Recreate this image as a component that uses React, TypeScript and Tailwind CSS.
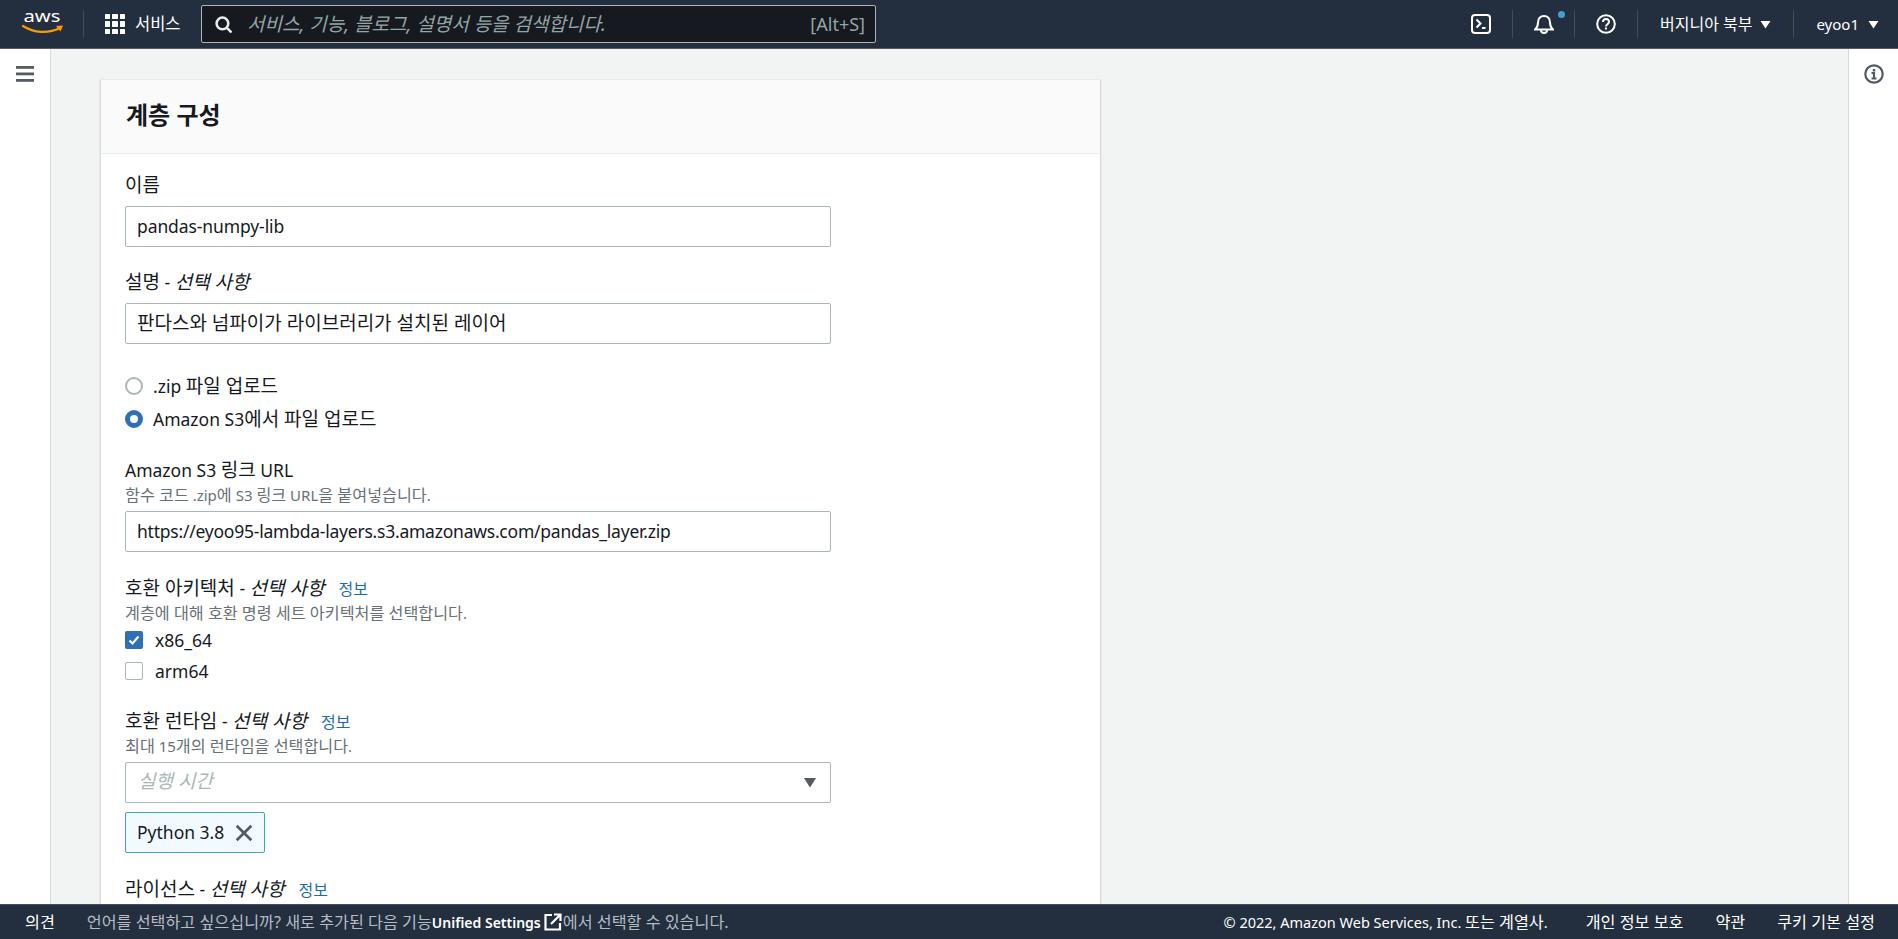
import React from "react";

const Caret = ({ className }: { className?: string }) => (
  <svg viewBox="0 0 12 10" className={className} fill="currentColor">
    <path d="M0.5 1h11L6 9.500z" />
  </svg>
);

/* Hangul runs in the reference are set wider than the Latin runs beside them. */
const Mix = ({ text, lat, kor }: { text: string; lat: string; kor: string }) => (
  <>
    {text.split(/([\uac00-\ud7a3]+(?:\s+[\uac00-\ud7a3]+)*)/).map((part, i) =>
      part ? (
        <span key={i} className={`whitespace-pre ${/[\uac00-\ud7a3]/.test(part) ? kor : lat}`}>
          {part}
        </span>
      ) : null
    )}
  </>
);

const Body = ({ text }: { text: string }) => <Mix text={text} lat="text-[17.5px]" kor="text-[19px]" />;
const Small = ({ text }: { text: string }) => <Mix text={text} lat="text-[15px]" kor="text-[16.2px]" />;

const Label = ({ text, optional, info }: { text: string; optional?: boolean; info?: boolean }) => (
  <div className="text-[#16191f] leading-[22px] h-[22px] flex items-center">
    <Body text={text} />
    {optional && (
      <span className="whitespace-pre">
        <span className="text-[17.5px]"> - </span>
        <i className="text-[19px]">선택 사항</i>
      </span>
    )}
    {info && <span className="ml-[14px] text-[16px] text-[#1a6bb5] mt-[2px]">정보</span>}
  </div>
);

const Sub = ({ text }: { text: string }) => (
  <div className="text-[#687078] leading-[16px] h-[16px] flex items-center mt-[6px]">
    <Small text={text} />
  </div>
);

const Input = ({ value, className }: { value: string; className?: string }) => (
  <div className={`w-[706px] h-[41px] border border-[#aab7b8] rounded-[2px] px-[11px] flex items-center text-[#16191f] bg-white ${className ?? ""}`}>
    <Body text={value} />
  </div>
);

const Divider = ({ className }: { className: string }) => <div className={`w-px h-[28px] bg-[#414d5c] ${className}`} />;

export default function App() {
  return (
    <div className="h-[939px] w-[1898px] flex flex-col overflow-hidden bg-[#f2f3f3] font-['Noto_Sans','Noto_Sans_CJK_KR',sans-serif]">
      <header className="h-[49px] shrink-0 bg-[#232f3e] border-b border-[#545b64] flex items-center text-white">
        <svg viewBox="0 0 42 26" className="ml-[22px] w-[42px] h-[26px] mb-[2px] overflow-visible">
          <text x="20" y="12" textAnchor="middle" fontSize="17" textLength="37" lengthAdjust="spacingAndGlyphs" fill="#fff" fontFamily="Noto Sans, sans-serif">aws</text>
          <path d="M1 16c11 7 25 8 37 2" stroke="#ff9900" strokeWidth="2.200" fill="none" strokeLinecap="round" />
          <path d="M34 16l7-.5-2.500 6z" fill="#ff9900" />
        </svg>
        <Divider className="ml-[19px]" />
        <div className="ml-[21px] grid grid-cols-3 gap-[2px] w-[20px] h-[20px]">
          {Array.from({ length: 9 }).map((_, i) => (
            <div key={i} className="w-[5.300px] h-[5.300px] bg-white rounded-[0.5px]" />
          ))}
        </div>
        <span className="ml-[10px] text-[16.500px] w-[46px] whitespace-nowrap">서비스</span>
        <div className="ml-[20px] w-[675px] h-[38px] bg-[#16191f] border border-[#aab7b8] rounded-[2px] flex items-center pl-[13px] pr-[10px]">
          <svg viewBox="0 0 16 16" className="w-[17px] h-[17px]" fill="none" stroke="#eaeded" strokeWidth="2.400">
            <circle cx="7" cy="7" r="5.500" />
            <path d="M11 11l4.500 4.500" />
          </svg>
          <span className="ml-[15px] italic text-[19px] text-[#95a5a6]">서비스, 기능, 블로그, 설명서 등을 검색합니다.</span>
          <span className="ml-auto text-[18px] text-[#95a5a6]">[Alt+S]</span>
        </div>
        <div className="ml-auto flex items-center">
          <svg viewBox="0 0 20 20" className="w-[20px] h-[20px]" fill="none" stroke="#fff" strokeWidth="2">
            <rect x="1" y="1" width="18" height="18" rx="3" />
            <path d="M5.500 5.500l4 4-4 4M11 14h3.500" />
          </svg>
          <Divider className="ml-[21px]" />
          <div className="relative ml-[21px] w-[20px] h-[20px]">
            <svg viewBox="0 0 20 20" className="w-[20px] h-[20px]" fill="none" stroke="#fff" strokeWidth="2">
              <path d="M1 15.500h18c-2.500-2-3-4-3-7 0-4-2.500-6.500-6-6.500S4 4.500 4 8.500c0 3-.5 5-3 7z" />
              <path d="M7 16a3 3 0 0 0 6 0" />
            </svg>
            <div className="absolute top-[-3px] right-[-11px] w-[7px] h-[7px] rounded-full bg-[#44a0cd]" />
          </div>
          <Divider className="ml-[20px]" />
          <svg viewBox="0 0 20 20" className="ml-[21px] w-[20px] h-[20px]" fill="none" stroke="#fff" strokeWidth="2">
            <circle cx="10" cy="10" r="8.800" />
            <path d="M7 8c0-1.800 1.300-3 3-3s3 1.200 3 2.800c0 2.400-3 2.400-3 4.700" />
            <path d="M10 13.500v2" />
          </svg>
          <Divider className="ml-[21px]" />
          <span className="ml-[22px] text-[16px] whitespace-nowrap">버지니아 북부</span>
          <Caret className="ml-[8px] w-[11px] h-[9px]" />
          <Divider className="ml-[22px]" />
          <span className="ml-[22px] text-[15px]">eyoo1</span>
          <Caret className="ml-[9px] w-[11px] h-[9px] mr-[19px]" />
        </div>
      </header>

      <div className="flex-1 min-h-0 flex">
        <aside className="w-[51px] shrink-0 bg-white border-r border-[#d5dbdb] pl-[16px] pt-[17px]">
          <svg viewBox="0 0 18 16" className="w-[18px] h-[16px]" fill="#545b64">
            <rect x="0" y="0" width="18" height="2.800" />
            <rect x="0" y="6.500" width="18" height="2.800" />
            <rect x="0" y="13" width="18" height="2.800" />
          </svg>
        </aside>

        <main className="flex-1 min-w-0 pl-[49px] pt-[31px] overflow-hidden">
          <section className="w-[1001px] bg-white border border-t-0 border-[#d5dbdb] shadow-[0_0_1px_rgba(0,28,36,0.2)]">
            <div className="h-[74px] bg-[#fafafa] border-b border-[#eaeded] flex items-center pl-[25px] pb-[4px]">
              <h2 className="text-[24px] font-semibold text-[#16191f]">계층 구성</h2>
            </div>
            <div className="pl-[24px] pt-[20px]">
              <Label text="이름" />
              <div className="mt-[10px]"><Input value="pandas-numpy-lib" className="tracking-[-0.1px]" /></div>

              <div className="mt-[24px]"><Label text="설명" optional /></div>
              <div className="mt-[10px]"><Input value="판다스와 넘파이가 라이브러리가 설치된 레이어" /></div>

              <div className="mt-[31px] flex items-center h-[22px] text-[#16191f]">
                <div className="w-[18px] h-[18px] rounded-full border-2 border-[#aab7b8] bg-white" />
                <span className="ml-[10px]"><Body text=".zip 파일 업로드" /></span>
              </div>
              <div className="mt-[11px] flex items-center h-[22px] text-[#16191f]">
                <div className="w-[18px] h-[18px] rounded-full border-[5px] border-[#2e6fb5] bg-white" />
                <span className="ml-[10px]"><Body text="Amazon S3에서 파일 업로드" /></span>
              </div>

              <div className="mt-[29px]"><Label text="Amazon S3 링크 URL" /></div>
              <Sub text="함수 코드 .zip에 S3 링크 URL을 붙여넣습니다." />
              <div className="mt-[8px]"><Input value="https://eyoo95-lambda-layers.s3.amazonaws.com/pandas_layer.zip" className="tracking-[-0.23px]" /></div>

              <div className="mt-[25px]"><Label text="호환 아키텍처" optional info /></div>
              <Sub text="계층에 대해 호환 명령 세트 아키텍처를 선택합니다." />
              <div className="mt-[8px] flex items-center h-[22px] text-[#16191f]">
                <div className="w-[18px] h-[18px] rounded-[2px] bg-[#2e6fb5] flex items-center justify-center">
                  <svg viewBox="0 0 14 14" className="w-[14px] h-[14px]" fill="none" stroke="#fff" strokeWidth="2.200">
                    <path d="M2.500 7.500l3 3 6-7" />
                  </svg>
                </div>
                <span className="ml-[12px]"><Body text="x86_64" /></span>
              </div>
              <div className="mt-[9px] flex items-center h-[22px] text-[#16191f]">
                <div className="w-[18px] h-[18px] rounded-[2px] border border-[#aab7b8] bg-white" />
                <span className="ml-[12px]"><Body text="arm64" /></span>
              </div>

              <div className="mt-[28px]"><Label text="호환 런타임" optional info /></div>
              <Sub text="최대 15개의 런타임을 선택합니다." />
              <div className="mt-[8px] w-[706px] h-[41px] border border-[#aab7b8] rounded-[2px] pl-[12px] pr-[13px] flex items-center justify-between">
                <span className="italic text-[19px] text-[#aab7b8] mb-[2px]">실행 시간</span>
                <Caret className="w-[14px] h-[11px] text-[#545b64]" />
              </div>
              <div className="mt-[9px] w-[140px] h-[41px] border border-[#44a0cd] rounded-[2px] bg-[#f1faff] flex items-center pl-[11px] text-[#16191f]">
                <span className="text-[17.500px]">Python 3.8</span>
                <svg viewBox="0 0 16 16" className="ml-[11px] w-[18px] h-[18px]" fill="none" stroke="#545b64" strokeWidth="2.400">
                  <path d="M1.500 1.500l13 13M14.500 1.500l-13 13" />
                </svg>
              </div>

              <div className="mt-[25px]"><Label text="라이선스" optional info /></div>
              <div className="h-[60px]" />
            </div>
          </section>
        </main>

        <aside className="w-[50px] shrink-0 bg-white border-l border-[#d5dbdb] pl-[15px] pt-[15px]">
          <svg viewBox="0 0 20 20" className="w-[20px] h-[20px]" fill="none" stroke="#545b64" strokeWidth="2.200">
            <circle cx="10" cy="10" r="8.700" />
            <path d="M7.500 9h2.500v5M7.500 14.500h5" />
            <path d="M10 5v2.500" strokeWidth="2.500" />
          </svg>
        </aside>
      </div>

      <footer className="h-[35px] shrink-0 bg-[#232f3e] border-t border-[#414d5c] flex items-center text-white">
        <span className="ml-[25px] text-[16.200px]">의견</span>
        <span className="ml-[32px] text-[#b5bcc4] text-[16.200px]">언어를 선택하고 싶으십니까? 새로 추가된 다음 기능</span>
        <span className="font-semibold text-[14px]">Unified Settings</span>
        <svg viewBox="0 0 18 18" className="ml-[3px] w-[18px] h-[18px]" fill="none" stroke="#fff" strokeWidth="2.200">
          <path d="M8 2H1.500v14.500H16V10" />
          <path d="M7 11l9-9M10 1.500h6.500V8" />
        </svg>
        <span className="ml-px text-[#b5bcc4] text-[16.200px]">에서 선택할 수 있습니다.</span>
        <span className="ml-auto"><Mix text="© 2022, Amazon Web Services, Inc. 또는 계열사." lat="text-[14.5px]" kor="text-[16.2px]" /></span>
        <span className="ml-[38px] text-[16.200px]">개인 정보 보호</span>
        <span className="ml-[32px] text-[16.200px]">약관</span>
        <span className="ml-[32px] mr-[23px] text-[16.200px]">쿠키 기본 설정</span>
      </footer>
    </div>
  );
}
